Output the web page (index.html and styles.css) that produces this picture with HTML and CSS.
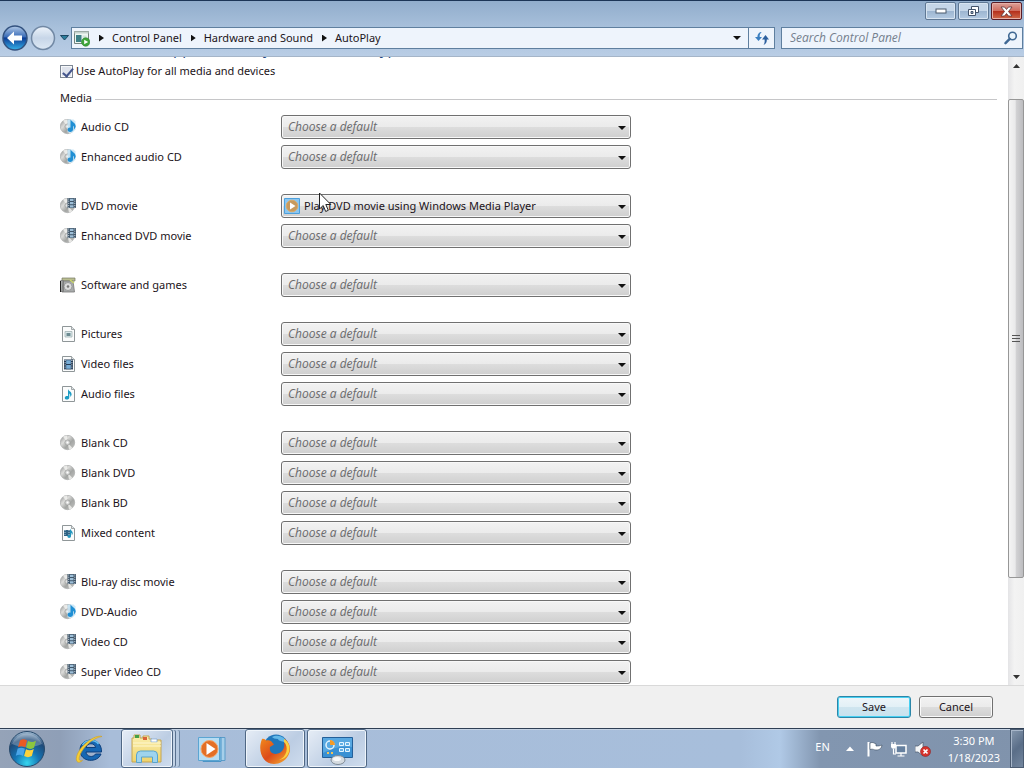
FILE: index.html
```html
<!DOCTYPE html>
<html lang="en">
<head>
    <meta charset="UTF-8">
    <meta name="viewport" content="width=device-width, initial-scale=1.0">
    <title>AutoPlay</title>
    <link rel="stylesheet" href="styles.css">
</head>
<body>
    <!-- shared icons -->
    <svg class="defs" width="0" height="0">
        <defs>
            <radialGradient id="orb" cx="50%" cy="90%" r="90%">
                <stop offset="0" stop-color="#35d5ee"/>
                <stop offset=".4" stop-color="#1474b4"/>
                <stop offset=".75" stop-color="#1f4a78"/>
                <stop offset="1" stop-color="#a9c2d8"/>
            </radialGradient>
            <linearGradient id="back" x1="0" y1="0" x2="0" y2="1">
                <stop offset="0" stop-color="#b4cbe8"/>
                <stop offset=".45" stop-color="#3b6db8"/>
                <stop offset=".5" stop-color="#0d3c94"/>
                <stop offset="1" stop-color="#35b2ea"/>
            </linearGradient>
            <linearGradient id="glass" x1="0" y1="0" x2="0" y2="1">
                <stop offset="0" stop-color="#eef4fb"/>
                <stop offset=".5" stop-color="#c7d6e8"/>
                <stop offset="1" stop-color="#dde8f4"/>
            </linearGradient>
            <linearGradient id="silver" x1="0" y1="0" x2="1" y2="1">
                <stop offset="0" stop-color="#8d8f8f"/>
                <stop offset=".35" stop-color="#dcdcda"/>
                <stop offset=".6" stop-color="#a4a6a4"/>
                <stop offset="1" stop-color="#c4c4c2"/>
            </linearGradient>
            <linearGradient id="fox" x1="0" y1="0" x2="1" y2="1">
                <stop offset="0" stop-color="#f28a1c"/>
                <stop offset=".5" stop-color="#dc4a1a"/>
                <stop offset="1" stop-color="#f7b733"/>
            </linearGradient>
            <linearGradient id="folder" x1="0" y1="0" x2="0" y2="1">
                <stop offset="0" stop-color="#fbf0b0"/>
                <stop offset="1" stop-color="#efd36c"/>
            </linearGradient>
        </defs>
        <symbol id="disc" viewBox="0 0 16 16">
            <circle cx="7.500" cy="7.500" r="7.200" fill="url(#silver)" stroke="#a3a5a5" stroke-width=".6"/>
            <path d="M7.500 7.500L3 1.800A7 7 0 0 1 7 .6zM7.500 7.500L12.500 13A7 7 0 0 1 9 14.600z" fill="#f2f2f0" opacity=".8"/>
            <circle cx="7.500" cy="7.500" r="2.600" fill="#d2d3d2" stroke="#929492" stroke-width=".6"/>
            <circle cx="7.500" cy="7.500" r="1" fill="#fff"/>
        </symbol>
        <symbol id="disc-audio" viewBox="0 0 16 16">
            <use href="#disc"/>
            <path d="M7.500.5h6l2 2v8l-3 3h-5z" fill="#c3e4f7" opacity=".85"/>
            <path d="M10.500.5c1 2.500 5.300 3 5.200 7-.3 1.600-1 2.400-2 3 .6-2 .2-3-.7-3.700v3.700c0 3.200-5.300 3-5.300.4 0-1.800 1.600-2.600 2.800-2.200z" fill="#1f8fd4"/>
        </symbol>
        <symbol id="disc-film" viewBox="0 0 16 16">
            <use href="#disc"/>
            <path d="M7.500 0h8.500v10H7.500z" fill="#40566a"/>
            <path d="M10 .8h3.500v2.200H10zM10 4h3.500v2.200H10zM10 7.200h3.500v2.200H10z" fill="#9dbfd8"/>
            <path d="M8.700.5v9.500M14.800.5v9.500" stroke="#dce6ee" stroke-width=".9" stroke-dasharray="1 1.200"/>
        </symbol>
        <symbol id="software" viewBox="0 0 16 16">
            <path d="M2 1h13v3H2z" fill="#b9bd90" stroke="#777a66" stroke-width=".7"/>
            <path d="M.5 3.500h3v11h-3M3 4h10l1.500 11H2z" fill="#a9acac" stroke="#777" stroke-width=".8"/>
            <circle cx="8" cy="9.500" r="4" fill="#dcdddd" stroke="#858787" stroke-width=".7"/>
            <circle cx="8" cy="9.500" r="1.300" fill="#777"/>
            <path d="M10 3l4 3" stroke="#cad768" stroke-width="1.500"/>
            <path d="M.5 4v11" stroke="#222"/>
        </symbol>
        <symbol id="sheet" viewBox="0 0 16 16">
            <path d="M2.500.5h9l3 3v12h-12z" fill="#fbfcfc" stroke="#8f9698"/>
            <path d="M11.500.5v3h3" fill="#dfe4e6" stroke="#8f9698" stroke-width=".8"/>
        </symbol>
        <symbol id="picture" viewBox="0 0 16 16">
            <use href="#sheet"/>
            <path d="M5 5.500h7v5.500H5z" fill="#dce9ec" stroke="#a2b2b4" stroke-width=".8"/>
            <path d="M6.500 7h4v3h-4z" fill="#6c8a91"/>
        </symbol>
        <symbol id="video" viewBox="0 0 16 16">
            <use href="#sheet"/>
            <path d="M4 3.500h9v10H4z" fill="#243b55"/>
            <path d="M6.200 4.200h4.600v3.800H6.200zM6.200 9h4.600v3.800H6.200z" fill="#78add6"/>
            <path d="M5.100 4v9.500M11.900 4v9.500" stroke="#e6edf3" stroke-dasharray="1 1.200"/>
        </symbol>
        <symbol id="audio" viewBox="0 0 16 16">
            <use href="#sheet"/>
            <path d="M8 3c.6 2.400 3.900 2.400 3.600 5.800-.3 1.100-.8 1.700-1.400 2.100.3-1.900-.1-2.800-.9-3.400v4c0 2.800-4.500 2.600-4.500.4 0-1.600 1.700-2.200 3.200-1.800z" fill="#1c9cc4"/>
        </symbol>
        <symbol id="mixed" viewBox="0 0 16 16">
            <use href="#sheet"/>
            <path d="M4 5h6v6H4z" fill="#2f6384"/>
            <path d="M5 5v6M9 5v6" stroke="#d3e4ee" stroke-width=".8" stroke-dasharray="1 1"/>
            <path d="M10 3.500c.5 2 3.200 2.500 2.700 5.500l-1 1.200c.2-1.500 0-2-.7-2.500v3.600c0 2.300-3.600 2.200-3.600.3 0-1.300 1.200-1.800 2.600-1.400z" fill="#2496bd"/>
        </symbol>
        <symbol id="wmp" viewBox="0 0 16 16">
            <path d="M.5.500h15v15H.5z" fill="#8cc6f0" stroke="#4da0dc"/>
            <circle cx="8" cy="8" r="5.800" fill="#c79a5e" stroke="#d9ab6a"/>
            <path d="M6 4.500l5.500 3.500L6 11.500z" fill="#fff"/>
        </symbol>
    </svg>

    <header class="frame">
        <div class="caption">
            <button class="cap" aria-label="Minimize"><svg width="12" height="6"><rect x="1" y="1" width="10" height="4" fill="#fff" stroke="#4b5a6d"/></svg></button>
            <button class="cap" aria-label="Restore"><svg width="13" height="12"><path d="M4.500 1.500h7v6h-7z" fill="#fff" stroke="#43536a"/><path d="M1.500 4.500h7v6h-7z" fill="#fff" stroke="#43536a"/><path d="M4 6.500h2v2H4z" fill="#9db4d0" stroke="#43536a"/></svg></button>
            <button class="cap close" aria-label="Close"><svg width="13" height="11"><path d="M1 1h3.500l2 2.500L8.500 1H12L8.500 5.500 12 10H8.500l-2-2.500-2 2.500H1l3.500-4.500z" fill="#fff" stroke="#5b3338" stroke-width=".8"/></svg></button>
        </div>
        <nav class="navbar">
            <button class="round" aria-label="Back"><svg width="26" height="26"><circle cx="13" cy="13" r="12" fill="url(#back)" stroke="#33527f" stroke-width="1.500"/><path d="M5 13l7-6.500v4h8v5h-8v4z" fill="#fff"/></svg></button>
            <button class="round" aria-label="Forward"><svg width="26" height="26"><circle cx="13" cy="13" r="11.500" fill="url(#glass)" stroke="#7188a4" stroke-width="1.500"/></svg></button>
            <button class="recent" aria-label="Recent pages"><svg width="9" height="6"><path d="M.5.500h8L4.500 5z" fill="#2b7e9c" stroke="#1d4763"/></svg></button>
            <div class="address">
                <svg class="place" width="16" height="17"><path d="M.5 1.500h14v12H.5z" fill="#eef6f2" stroke="#74847f"/><path d="M.5 1.500h14v2H.5z" fill="#c5d2ce"/><path d="M2 5h5.500v7H2z" fill="#3d7f86"/><path d="M8.500 5.500h4v3h-4z" fill="#cfe3da"/><circle cx="11.700" cy="12" r="4.200" fill="#3fa53a" stroke="#2c8530" stroke-width=".6"/><path d="M10.200 9.800l4 2.200-4 2.200z" fill="#fff"/></svg>
                <span class="sep"></span><a href="#">Control Panel</a>
                <span class="sep"></span><a href="#">Hardware and Sound</a>
                <span class="sep"></span><a href="#">AutoPlay</a>
                <button class="drop" aria-label="Previous locations"><span class="arrow"></span></button>
                <button class="refresh" aria-label="Refresh"><svg width="16" height="16"><path d="M1 7l3.500 4L8 7H5.700c-.2-2 .3-3.500 2-5C5 2 3.400 4 3.400 7z" fill="#3b7fc0"/><path d="M8 9.500L11.500 5 15 9.500h-2.200c.1 2.500-.6 4.500-3.300 5.500 1.200-1.800 1.300-3.500 1.100-5.500z" fill="#2c5f9e"/></svg></button>
            </div>
            <div class="search">
                <input type="text" placeholder="Search Control Panel" aria-label="Search Control Panel">
                <svg width="14" height="14"><circle cx="8.500" cy="5" r="3.800" fill="#eaf4fc" stroke="#3f6894" stroke-width="1.600"/><path d="M5.700 7.800L1.500 12.200" stroke="#3f6894" stroke-width="2.400" stroke-linecap="round"/></svg>
            </div>
        </nav>
    </header>

    <div class="view">
        <main>
            <h1>Choose what happens when you insert each type of media or device</h1>
            <label class="all"><input type="checkbox" checked>Use AutoPlay for all media and devices</label>
            <h2>Media</h2>

            <div class="group">
                <div class="row"><svg class="icon"><use href="#disc-audio"/></svg><label for="m1">Audio CD</label><span class="pick"><select id="m1"><option>Choose a default</option></select></span></div>
                <div class="row"><svg class="icon"><use href="#disc-audio"/></svg><label for="m2">Enhanced audio CD</label><span class="pick"><select id="m2"><option>Choose a default</option></select></span></div>
            </div>
            <div class="group">
                <div class="row">
                    <svg class="icon"><use href="#disc-film"/></svg><label for="m3">DVD movie</label>
                    <span class="pick chosen"><select id="m3"><option>Play DVD movie using Windows Media Player</option></select><svg class="app"><use href="#wmp"/></svg>
                        <svg class="pointer" width="14" height="21"><path d="M1.500 1v16l3.700-3.500L7.700 19.500l2.600-1.200L7.800 12.500h5z" fill="#fff" stroke="#222"/></svg>
                    </span>
                </div>
                <div class="row"><svg class="icon"><use href="#disc-film"/></svg><label for="m4">Enhanced DVD movie</label><span class="pick"><select id="m4"><option>Choose a default</option></select></span></div>
            </div>
            <div class="group">
                <div class="row"><svg class="icon"><use href="#software"/></svg><label for="m5">Software and games</label><span class="pick"><select id="m5"><option>Choose a default</option></select></span></div>
            </div>
            <div class="group">
                <div class="row"><svg class="icon"><use href="#picture"/></svg><label for="m6">Pictures</label><span class="pick"><select id="m6"><option>Choose a default</option></select></span></div>
                <div class="row"><svg class="icon"><use href="#video"/></svg><label for="m7">Video files</label><span class="pick"><select id="m7"><option>Choose a default</option></select></span></div>
                <div class="row"><svg class="icon"><use href="#audio"/></svg><label for="m8">Audio files</label><span class="pick"><select id="m8"><option>Choose a default</option></select></span></div>
            </div>
            <div class="group">
                <div class="row"><svg class="icon"><use href="#disc"/></svg><label for="m9">Blank CD</label><span class="pick"><select id="m9"><option>Choose a default</option></select></span></div>
                <div class="row"><svg class="icon"><use href="#disc"/></svg><label for="m10">Blank DVD</label><span class="pick"><select id="m10"><option>Choose a default</option></select></span></div>
                <div class="row"><svg class="icon"><use href="#disc"/></svg><label for="m11">Blank BD</label><span class="pick"><select id="m11"><option>Choose a default</option></select></span></div>
                <div class="row"><svg class="icon"><use href="#mixed"/></svg><label for="m12">Mixed content</label><span class="pick"><select id="m12"><option>Choose a default</option></select></span></div>
            </div>
            <div class="group">
                <div class="row"><svg class="icon"><use href="#disc-film"/></svg><label for="m13">Blu-ray disc movie</label><span class="pick"><select id="m13"><option>Choose a default</option></select></span></div>
                <div class="row"><svg class="icon"><use href="#disc-audio"/></svg><label for="m14">DVD-Audio</label><span class="pick"><select id="m14"><option>Choose a default</option></select></span></div>
                <div class="row"><svg class="icon"><use href="#disc-film"/></svg><label for="m15">Video CD</label><span class="pick"><select id="m15"><option>Choose a default</option></select></span></div>
                <div class="row"><svg class="icon"><use href="#disc-film"/></svg><label for="m16">Super Video CD</label><span class="pick"><select id="m16"><option>Choose a default</option></select></span></div>
            </div>
        </main>
        <div class="scrollbar">
            <span class="end"><svg width="7" height="4"><path d="M0 4l3.500-4L7 4z" fill="#333"/></svg></span>
            <span class="before"></span>
            <span class="thumb"><svg width="8" height="8"><path d="M0 .5h8M0 3.500h8M0 6.500h8" stroke="#555"/></svg></span>
            <span class="after"></span>
            <span class="end"><svg width="7" height="4"><path d="M0 0h7L3.500 4z" fill="#333"/></svg></span>
        </div>
    </div>

    <footer class="actions">
        <button class="btn default">Save</button>
        <button class="btn">Cancel</button>
    </footer>

    <div class="taskbar">
        <button class="start" aria-label="Start">
            <svg width="38" height="38"><circle cx="19" cy="19" r="17.500" fill="url(#orb)" stroke="#27496b"/><path d="M4 14a16 16 0 0 1 30 0c-8 4-22 4-30 0z" fill="#fff" opacity=".25"/><path d="M12 10.500c3-1.800 4.500-1.500 7 0l-1.800 7c-2.500-1.500-4.500-1.600-7.200-.2z" fill="#ea5a24"/><path d="M20 11c3 1.400 5 1.400 8-.3l-2 7c-3 1.600-5 1.500-7.800.1z" fill="#8cc63e"/><path d="M9.700 18.600c2.800-1.400 4.700-1.200 7.200.2L15 26c-2.500-1.500-4.300-1.600-7.200-.2z" fill="#4aa5e8"/><path d="M18 19.300c2.800 1.400 4.800 1.300 7.800-.2l-2 7c-2.800 1.500-5 1.500-7.700 0z" fill="#fdd23a"/></svg>
        </button>
        <button class="task" aria-label="Internet Explorer">
            <svg width="32" height="32"><path d="M28.500 19H13c.3 5 7.500 6 9.500 2h5.500C25 30 7 30 7 17 7 4 29 3 28.500 19zM13 14.500h9.600c-.7-5-8.600-5-9.600 0z" fill="#1667b3" stroke="#0d3f7c" stroke-width="1"/><path d="M9.500 12c2-4 11-7 16-1" fill="none" stroke="#63c0ef" stroke-width="1.500"/><path d="M29 3.500C22 1 6 13 3.500 24c-1 5 2 7 6 3.500-3 .8-4-.8-3-4C9 15 20 4.500 29 3.500z" fill="#f6ce35" stroke="#cf9f24" stroke-width=".6"/></svg>
        </button>
        <button class="task open stack" aria-label="Windows Explorer">
            <svg width="34" height="32"><path d="M2 5h2V2h6v3h3V3h6v3h3v1h9v22H2z" fill="url(#folder)" stroke="#c4a553"/><path d="M5 2h4v3H5z" fill="#43a047"/><path d="M13 4h4v3h-4z" fill="#d9643a"/><path d="M21 6h6v3h-6z" fill="#fff" stroke="#7aa5d4" stroke-width=".7"/><path d="M3 10h28M3 13h28" stroke="#fff8cf"/><path d="M6.500 29.500V22q0-4 4-4h13q4 0 4 4v7.500h-5V24h-11v5.500z" fill="#9fd4ee" stroke="#5aa4cc"/></svg>
        </button>
        <button class="task" aria-label="Windows Media Player">
            <svg width="32" height="32"><path d="M9 4.500h19v23H9z" fill="#a6cfea" stroke="#5b9cc9"/><path d="M6 4.500h18v24H6z" fill="#8ec5e8" stroke="#4b94c6"/><path d="M1.500 4.500h21v23h-21z" fill="#b7ddf3" stroke="#5ba5d2"/><circle cx="12.500" cy="16" r="8.500" fill="#e36f26" stroke="#f3a569"/><path d="M9.500 10l9 6-9 6z" fill="#fff"/></svg>
        </button>
        <button class="task open" aria-label="Firefox">
            <svg width="32" height="32"><circle cx="17" cy="14" r="12.500" fill="#2077bb"/><path d="M13 4c5-3 14-1 15 7-4-4-8-2-9-5-3 0-5-1-6-2z" fill="#62b8e8"/><path d="M3 6c2-.5 3 .5 4 1.500 2-.6 3.500-.5 5 .5l3 3.500-4 2.500c-1 5 3 8 8 6.500 5-1.500 7-6 6-11 2 1 3 3 3 5 0-4-1-7-3-9 5 3 7 9 5.500 14C28 27 22 31 15 31 4 31-2 18 3 6z" fill="url(#fox)"/><path d="M25 9c5 5 3 15-5 18 8-1 12-8 10-15-1-3-3-5-5-6z" fill="#fbd13f"/></svg>
        </button>
        <button class="task open" aria-label="Control Panel">
            <svg width="32" height="32"><path d="M1.500 4.500h30v20h-30z" fill="#3990d3" stroke="#235f99"/><path d="M2 5h29v9C20 12 10 16 2 20z" fill="#73bbec" opacity=".55"/><circle cx="9" cy="12" r="4" fill="none" stroke="#e3f3fc" stroke-width="1.500"/><path d="M9 12V7a5 5 0 0 1 5 5z" fill="#f59b28"/><path d="M18.500 9.500h4v3h-4zM24.500 9.500h4v3h-4zM18.500 15.500h4v3h-4zM24.500 15.500h4v3h-4z" fill="#66b1e5" stroke="#e6f5ff"/><path d="M6 20h2M10 20h2" stroke="#f4c456" stroke-width="2"/><ellipse cx="17" cy="27" rx="7" ry="4.500" fill="#d5dbe0" stroke="#7f8b96"/><ellipse cx="16" cy="26" rx="4" ry="2" fill="#f7f9fa"/></svg>
        </button>
        <div class="tray">
            <span class="lang">EN</span>
            <svg width="8" height="5"><path d="M0 5l4-4.500L8 5z" fill="#fff"/></svg>
            <svg width="16" height="16"><path d="M1.500 1v14.500" stroke="#fff" stroke-width="2"/><path d="M3 2c3-1.500 4 .5 6 .8V5c2 0 3.500 0 6-1-.5 3-2 5-6 5-2 0-3-1.500-6-.5z" fill="#fff" stroke="#39495c" stroke-width=".6"/></svg>
            <svg width="16" height="16"><path d="M5 4.500h10v7.500H5z" fill="#66809f" stroke="#fff" stroke-width="1.500"/><path d="M10 12v3M6.500 15h7M2.500 7.500V13H5M1 1v2M4 1v2" stroke="#fff" stroke-width="1.200" fill="none"/><path d="M0 3h5v3l-1 1.500H1L0 6z" fill="#fff"/></svg>
            <svg width="17" height="16"><path d="M0 5h3l5-4v14l-5-4H0z" fill="#f4f6f8" stroke="#47566b" stroke-width=".7"/><circle cx="10.500" cy="10.500" r="5" fill="#d6332c" stroke="#8d2224" stroke-width=".6"/><path d="M8.500 8.500l4 4m0-4l-4 4" stroke="#fff" stroke-width="1.700"/></svg>
            <time class="clock">3:30 PM<br>1/18/2023</time>
            <button class="desktop" aria-label="Show desktop"></button>
        </div>
    </div>
</body>
</html>
```

FILE: styles.css
```css
* { box-sizing: border-box; }
body { margin: 0; height: 100vh; display: flex; flex-direction: column; overflow: hidden; background: #fff; color: #1c1420; font: 11px/16px "Noto Sans", "Open Sans", sans-serif; }
button, input, select { font: inherit; color: inherit; margin: 0; }
button { padding: 0; border: none; background: none; }
a { color: inherit; text-decoration: none; }
svg { display: block; flex: none; }
.defs { position: absolute; }

/* window frame */
.frame { border-top: 1px solid #1c3557; background: linear-gradient(#91adcc, #a9c1dc 28px, #b9cde5); border-bottom: 1px solid #a5b5c8; }
.caption { display: flex; justify-content: flex-end; gap: 2px; height: 23px; padding: 1px 2px 4px; }
.cap { width: 31px; display: flex; align-items: center; justify-content: center; border: 1px solid #5f7894; border-radius: 2px; background: linear-gradient(#c5d6e8 50%, #9cb5d0 50%, #b4cae2); box-shadow: inset 0 0 0 1px #d7e4f1; }
.close { border-color: #5a1c25; background: linear-gradient(#dda199, #cf6a5c 50%, #b32d1b 50%, #cf6a4a); box-shadow: inset 0 0 0 1px #e6b0a8; }
.navbar { display: flex; align-items: center; padding: 1px 1px 5px 2px; height: 32px; }
.round { margin-right: 2px; }
.recent { width: 13px; display: flex; justify-content: center; }
.address, .search { display: flex; align-items: center; height: 22px; border: 1px solid #5f7f9f; background: #eef4fc; }
.address { flex: 702; }
.place { margin-left: 2px; }
.sep { width: 5px; height: 7px; background: #111; clip-path: polygon(0 0, 100% 50%, 0 100%); margin: 0 8px 0 9px; }
.drop { margin-left: auto; width: 22px; height: 20px; display: flex; align-items: center; justify-content: center; }
.arrow, .pick::after { width: 8px; height: 4px; background: #111; clip-path: polygon(0 0, 100% 0, 50% 100%); }
.refresh { width: 26px; height: 20px; border-left: 1px solid #5f7f9f; display: flex; align-items: center; justify-content: center; }
.search { flex: 228; margin-left: 6px; padding: 0 4px 0 8px; }
.search input { flex: 1; min-width: 0; border: none; background: none; padding: 0; outline: none; font-family: "Open Sans", sans-serif; font-size: 12px; }
.search input::placeholder { color: #75808e; font-style: italic; opacity: 1; }

/* page, scrolled a little way down */
.view { flex: 1; min-height: 0; display: flex; }
main { flex: 1; min-width: 0; overflow: hidden; padding: 0 11px 0 60px; }
h1 { margin: -20px 0 4px; font-size: 15px; line-height: 22px; font-weight: normal; color: #1f4a86; white-space: nowrap; }
.all { display: flex; align-items: center; gap: 3px; height: 16px; }
.all input { width: 13px; height: 13px; appearance: none; border: 1px solid #7e8794; background: #dfe3ec; box-shadow: inset 0 0 0 1px #f6f8fa; position: relative; }
.all input:checked::after { content: ""; position: absolute; left: 4px; top: 0; width: 4px; height: 9px; border: solid #44558c; border-width: 0 2px 2px 0; transform: rotate(40deg); }
h2 { display: flex; align-items: center; gap: 3px; margin: 11px 0 6px; font-size: 11px; line-height: 16px; font-weight: normal; }
h2::after { content: ""; flex: 1; height: 1px; background: #c6c6c8; margin-top: 3px; }
.group { margin-bottom: 19px; }
.row { display: flex; align-items: center; height: 30px; }
.icon { width: 16px; height: 16px; margin-right: 5px; }
.row label { width: 200px; }
.pick { position: relative; width: 350px; }
.pick select { display: block; width: 100%; height: 24px; appearance: none; border: 1px solid #707070; border-radius: 3px; padding: 0 20px 0 6px; font: italic 12px/16px "Open Sans", sans-serif; color: #6a6a6c; background: linear-gradient(#f2f2f2, #ebebeb 50%, #dddddd 50%, #cfcfcf); box-shadow: inset 0 0 0 1px #f8f8f8; }
.pick::after { content: ""; position: absolute; right: 5px; top: 11px; pointer-events: none; }
.pick.chosen select { font: inherit; color: #1c1420; padding-left: 22px; }
.app { position: absolute; left: 3px; top: 4px; width: 16px; height: 16px; }
.pointer { position: absolute; left: 37px; top: -2px; }

.scrollbar { width: 16px; display: flex; flex-direction: column; background: linear-gradient(90deg, #e4e4e6, #f3f3f3 40%, #f0f0f0); }
.end { height: 17px; display: flex; align-items: center; justify-content: center; }
.before { flex: 25; }
.after { flex: 90; }
.thumb { flex: 480; display: flex; align-items: center; justify-content: center; border: 1px solid #979797; border-radius: 2px; background: linear-gradient(90deg, #f4f4f4, #e9e9ea 45%, #d2d2d4 50%, #bdbdc0); }

.actions { display: flex; align-items: center; justify-content: flex-end; gap: 8px; height: 43px; padding-right: 31px; border-top: 1px solid #d9d9d9; background: #f0f0f0; }
.btn { width: 74px; height: 22px; border: 1px solid #707070; border-radius: 3px; background: linear-gradient(#f2f2f2, #ebebeb 50%, #dddddd 50%, #cfcfcf); box-shadow: inset 0 0 0 1px #fafafa; }
.default { border-color: #2c86a8; background: linear-gradient(#eef6fa, #e2f0f6 50%, #cfe5ef 50%, #c8e2ee); box-shadow: inset 0 0 0 1px #48d0f2; }

/* taskbar */
.taskbar { display: flex; gap: 2px; height: 40px; border-top: 1px solid #2f3f54; background: linear-gradient(90deg, #95a3b8, #8f9fb7 60px, #a8bdd9 110px, #a7bedb 740px, #b0c9e6 780px, #8296b0 820px, #8093ac); box-shadow: inset 0 1px 0 #c6d4e5; }
.start { width: 57px; padding-left: 8px; }
.task { width: 60px; display: flex; align-items: center; justify-content: center; }
.open { border: 1px solid #4f6784; border-radius: 3px; background: linear-gradient(135deg, #e6edf6, #bccde3 60%, #cfddee); box-shadow: inset 0 0 0 1px #eff5fb; }
.stack { width: 52px; margin-right: 8px; box-shadow: inset 0 0 0 1px #eff5fb, 3px 0 0 -1px #c3d3e6, 4px 0 0 -1px #58708e, 7px 0 0 -1px #b6c9e0, 8px 0 0 -1px #7089a6; }
.tray { margin-left: auto; display: flex; align-items: center; color: #fff; }
.tray svg { margin: 0 8px 0 0; }
.tray .lang { margin: 0 16px 4px 0; }
.tray .lang + svg { margin-right: 13px; }
.clock { margin: 0 10px 0 8px; text-align: center; line-height: 17px; }
.desktop { width: 14px; align-self: stretch; border: 1px solid #4b5c72; background: linear-gradient(135deg, #8698ae, #5a6e88 50%, #73869e); box-shadow: inset 1px 1px 0 #a7b6c9; }
```
